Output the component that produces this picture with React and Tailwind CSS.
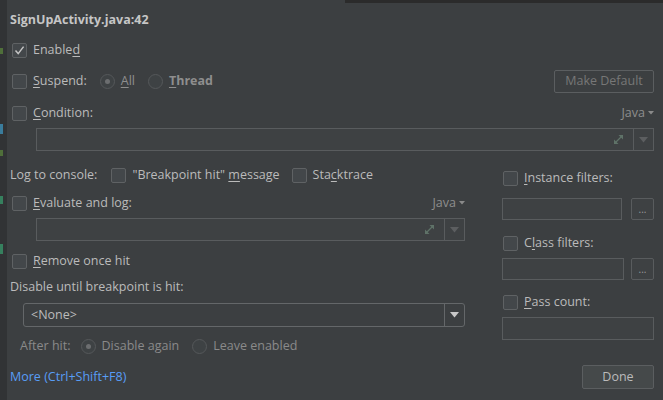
import React from 'react';

const Box = ({ checked }) => (
    <span className="w-[15px] h-[15px] rounded-[2px] border border-[#5f6264] bg-[#43474a] flex items-center justify-center shrink-0">
        {checked && (
            <svg width="11" height="11" viewBox="0 0 11 11">
                <path d="M1.5 5.6 L4.2 8.6 L9.6 1.6" stroke="#c4c4c4" strokeWidth="1.5" fill="none" />
            </svg>
        )}
    </span>
);

const Radio = ({ on }) => (
    <span className="w-[15px] h-[15px] rounded-full border border-[#55585a] bg-[#3e4244] flex items-center justify-center shrink-0">
        {on && <span className="w-[5px] h-[5px] rounded-full bg-[#6c6e70]" />}
    </span>
);

const Check = ({ checked, children, className = '' }) => (
    <div className={`flex items-center gap-[6px] pl-[2px] ${className}`}>
        <Box checked={checked} />
        <span>{children}</span>
    </div>
);

const Lang = () => (
    <span className="flex items-center gap-[3px] text-[#8e8e8e]">
        Java
        <svg width="6" height="4" viewBox="0 0 6 4"><path d="M0 0 H6 L3 3.5 Z" fill="#8a8a8a" /></svg>
    </span>
);

const Expand = () => (
    <svg width="13" height="13" viewBox="0 0 13 13">
        <path d="M3 10 L10 3" stroke="#5f7268" strokeWidth="1.3" />
        <path d="M6.5 2 H11 V6.5 Z" fill="#5f7268" />
        <path d="M2 6.5 V11 H6.5 Z" fill="#5f7268" />
    </svg>
);

const Arrow = ({ color = '#5c5e60' }) => (
    <svg width="9" height="6" viewBox="0 0 9 6"><path d="M0 0 H9 L4.5 5.5 Z" fill={color} /></svg>
);

const CodeField = ({ className = '' }) => (
    <div className={`h-[23px] border border-[#595c5e] bg-[#3e4143] flex justify-end ${className}`}>
        <div className="w-[30px] flex items-center justify-center"><Expand /></div>
        <div className="w-[20px] border-l border-[#595c5e] flex items-center justify-center"><Arrow /></div>
    </div>
);

const Field = ({ className = '' }) => (
    <div className={`h-[22px] border border-[#595c5e] bg-[#3e4143] ${className}`} />
);

const Dots = () => (
    <div className="w-[23px] h-[22px] border border-[#595c5e] rounded-[2px] bg-[#3e4143] flex items-end justify-center pb-[5px] text-[10px] leading-none text-[#9a9a9a]">
        ...
    </div>
);

export default function App() {
    return (
        <div className="w-[663px] h-[400px] overflow-hidden flex bg-[#3c3f41] text-[#bbbbbb] text-[12.5px]" style={{ fontFamily: '"Open Sans", "Noto Sans", sans-serif' }}>
            {/* editor gutter behind the popup */}
            <div className="w-[7px] shrink-0 bg-[#313335] flex flex-col">
                <div className="h-[48px]" />
                <div className="h-[6px] w-[3px] bg-[#4f6f3a]" />
                <div className="h-[70px]" />
                <div className="h-[10px] w-[3px] bg-[#3a7c9c]" />
                <div className="h-[16px]" />
                <div className="h-[6px] w-[3px] bg-[#4f6f3a]" />
                <div className="h-[40px]" />
                <div className="h-[8px] w-[3px] bg-[#36805e]" />
                <div className="h-[40px]" />
                <div className="h-[10px] w-[3px] bg-[#36805e]" />
            </div>

            <div className="flex-1 flex flex-col pl-[3px] pr-[9px]">
                <div className="h-[3px] -mr-[9px] flex justify-end shrink-0">
                    <div className="w-[318px] bg-[#2b2b2b]" />
                </div>

                <div className="h-[22px] mt-[6px] flex items-center font-bold text-[#c6c6c6]">SignUpActivity.java:42</div>

                <Check checked className="h-[22px] mt-[8px]">Enable<u className="underline-offset-2">d</u></Check>

                <div className="h-[23px] mt-[9px] flex items-center justify-between">
                    <div className="flex items-center">
                        <Check><u className="underline-offset-2">S</u>uspend:</Check>
                        <div className="flex items-center gap-[6px] ml-[13px] text-[#8e8e8e]">
                            <Radio on />
                            <span><u className="underline-offset-2">A</u>ll</span>
                        </div>
                        <div className="flex items-center gap-[6px] ml-[13px] text-[#8e8e8e] font-bold">
                            <Radio />
                            <span><u className="underline-offset-2">T</u>hread</span>
                        </div>
                    </div>
                    <div className="w-[100px] h-[23px] border border-[#5b5e60] rounded-[2px] flex items-center justify-center text-[#777777]">Make Default</div>
                </div>

                <div className="h-[22px] mt-[9px] flex items-center justify-between">
                    <Check><u className="underline-offset-2">C</u>ondition:</Check>
                    <Lang />
                </div>
                <CodeField className="mt-[4px] ml-[26px]" />

                <div className="flex">
                    <div className="w-[455px] flex flex-col">
                        <div className="h-[22px] mt-[13px] flex items-center">
                            <span>Log to console:</span>
                            <Check className="ml-[12px]">"Breakpoint hit" <u className="underline-offset-2">m</u>essage</Check>
                            <Check className="ml-[10px]">Sta<u className="underline-offset-2">c</u>ktrace</Check>
                        </div>
                        <div className="h-[22px] mt-[6px] flex items-center justify-between">
                            <Check><u className="underline-offset-2">E</u>valuate and log:</Check>
                            <Lang />
                        </div>
                        <CodeField className="mt-[4px] ml-[26px]" />
                        <Check className="h-[22px] mt-[9px]"><u className="underline-offset-2">R</u>emove once hit</Check>
                        <div className="h-[22px] mt-[4px] flex items-center">Disable until breakpoint is hit:</div>
                        <div className="h-[24px] mt-[5px] ml-[13px] border border-[#646769] rounded-[3px] flex">
                            <div className="flex-1 flex items-center pl-[7px]">&lt;None&gt;</div>
                            <div className="w-[20px] border-l border-[#646769] flex items-center justify-center"><Arrow color="#c8c8c8" /></div>
                        </div>
                        <div className="h-[22px] mt-[8px] ml-[10px] flex items-center text-[#8a8a8a]">
                            <span>After hit:</span>
                            <div className="flex items-center gap-[6px] ml-[10px]">
                                <Radio on />
                                <span>Disable again</span>
                            </div>
                            <div className="flex items-center gap-[6px] ml-[13px]">
                                <Radio />
                                <span>Leave enabled</span>
                            </div>
                        </div>
                    </div>

                    <div className="flex-1 ml-[36px] flex flex-col">
                        <Check className="h-[22px] mt-[16px] pl-0"><u className="underline-offset-2">I</u>nstance filters:</Check>
                        <div className="flex items-center gap-[9px] mt-[9px]">
                            <Field className="flex-1 ml-[1px]" />
                            <Dots />
                        </div>
                        <Check className="h-[22px] mt-[12px] pl-0">C<u className="underline-offset-2">l</u>ass filters:</Check>
                        <div className="flex items-center gap-[7px] mt-[4px]">
                            <Field className="flex-1 ml-[1px]" />
                            <Dots />
                        </div>
                        <Check className="h-[22px] mt-[11px] pl-0"><u className="underline-offset-2">P</u>ass count:</Check>
                        <Field className="h-[23px] mt-[4px] ml-[1px]" />
                    </div>
                </div>

                <div className="h-[24px] mt-[8px] flex items-center justify-between">
                    <span className="text-[#589df6]">More (Ctrl+Shift+F8)</span>
                    <div className="w-[72px] h-[24px] border border-[#5b5e60] rounded-[2px] bg-[#45494a] flex items-center justify-center">Done</div>
                </div>
            </div>
        </div>
    );
}
